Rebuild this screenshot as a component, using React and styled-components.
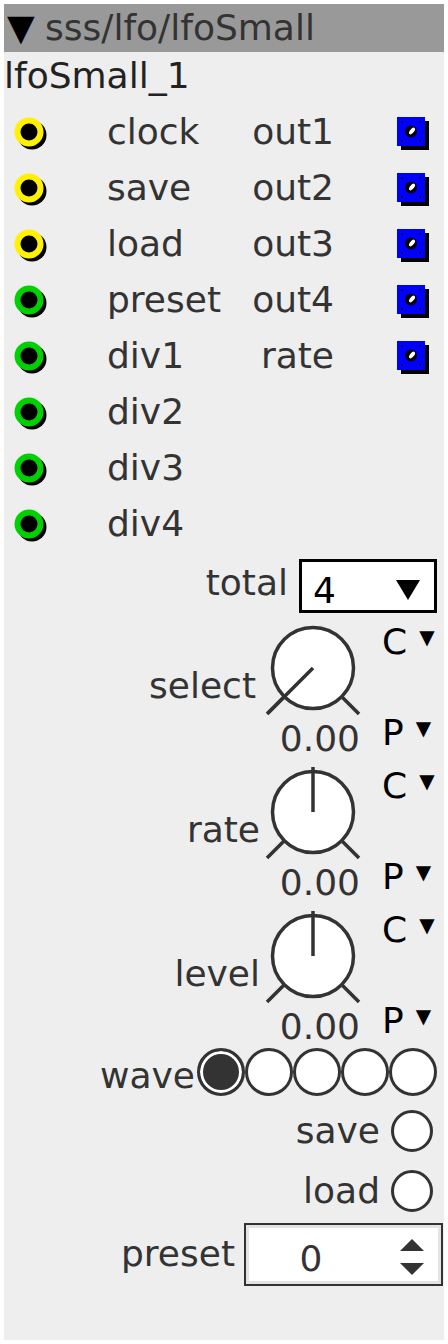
import React from 'react';
import styled, { createGlobalStyle } from 'styled-components';

const GlobalStyle = createGlobalStyle`
  html, body {
    margin: 0;
    padding: 0;
    background: #ffffff;
  }
  body {
    font-family: "DejaVu Sans", "Noto Sans", sans-serif;
  }
`;

const Panel = styled.div`
  margin: 4px;
  width: 440px;
  height: 1336px;
  background: #eeeeee;
  font-size: 36px;
  color: #333333;
  overflow: hidden;
`;

const Header = styled.div`
  height: 48px;
  line-height: 48px;
  background: #999999;
  display: flex;
  padding-left: 3px;
  white-space: nowrap;
`;

const HeaderArrow = styled.span`
  color: #000000;
  width: 38px;
`;

const Title = styled.div`
  height: 52px;
  line-height: 48px;
  color: #222222;
`;

const PortRow = styled.div`
  display: grid;
  grid-template-columns: 103px 1fr auto 110px;
  height: 56px;
  line-height: 56px;
`;

const PortSlot = styled.div`
  padding-left: ${(p) => p.$inset}px;
  padding-top: 13px;
  line-height: 0;
`;

const PortLabel = styled.div`
  text-align: ${(p) => (p.$right ? 'right' : 'left')};
`;

const TotalRow = styled.div`
  margin-top: 7px;
  height: 54px;
  display: flex;
  justify-content: flex-end;
  align-items: flex-start;
  gap: 11px;
  padding-right: 7px;
`;

const Label = styled.div`
  line-height: ${(p) => p.$lh || 48}px;
  padding-top: ${(p) => p.$top || 0}px;
`;

const Dropdown = styled.div`
  box-sizing: border-box;
  width: 138px;
  height: 54px;
  border: 3px solid #000000;
  background: #ffffff;
  color: #000000;
  display: flex;
  justify-content: space-between;
  align-items: flex-start;
  padding: 10px 14px 0 11px;
  line-height: 38px;
`;

const DropArrow = styled.svg`
  margin-top: 8px;
`;

const KnobBlock = styled.div`
  display: grid;
  grid-template-columns: 1fr 98px 82px;
  grid-template-rows: 100px 44px;
  height: 144px;
  margin-top: ${(p) => p.$top || 0}px;
`;

const KnobLabel = styled.div`
  grid-column: 1;
  grid-row: 1;
  text-align: right;
  padding-right: ${(p) => p.$pad}px;
  padding-top: 48px;
  line-height: 41px;
`;

const KnobFace = styled.svg`
  grid-column: 2;
  grid-row: 1;
  display: block;
`;

const KnobValue = styled.div`
  grid-column: 2;
  grid-row: 2;
  text-align: right;
  padding-right: 2px;
  line-height: 44px;
`;

const KnobSide = styled.div`
  grid-column: 3;
  grid-row: 1 / 3;
  display: flex;
  flex-direction: column;
  justify-content: space-between;
  padding: 4px 0 2px 20px;
  line-height: 41px;
  color: #000000;
`;

const Mode = styled.div`
  display: flex;
  align-items: baseline;
`;

const SmallArrow = styled.span`
  font-size: 20px;
  margin-left: 12px;
  position: relative;
  top: -10px;
`;

const WaveRow = styled.div`
  margin-top: -1px;
  height: 48px;
  display: flex;
  justify-content: flex-end;
  align-items: flex-start;
  padding-right: 7px;
  gap: 2px;
`;

const Radios = styled.div`
  display: flex;
`;

const Radio = styled.span`
  box-sizing: border-box;
  width: 48px;
  height: 48px;
  border-radius: 50%;
  border: 3px solid #333333;
  background: ${(p) => (p.$on ? '#333333' : '#ffffff')};
  box-shadow: ${(p) => (p.$on ? 'inset 0 0 0 3px #ffffff' : 'none')};
`;

const ButtonRow = styled.div`
  margin-top: ${(p) => p.$top}px;
  height: 42px;
  display: flex;
  justify-content: flex-end;
  align-items: flex-start;
  padding-right: 11px;
  gap: 11px;
`;

const RoundButton = styled.span`
  box-sizing: border-box;
  width: 42px;
  height: 42px;
  border-radius: 50%;
  border: 3px solid #333333;
  background: #ffffff;
`;

const PresetRow = styled.div`
  margin-top: 11px;
  height: 63px;
  display: flex;
  justify-content: flex-end;
  align-items: flex-start;
  padding-right: 1px;
  gap: 9px;
`;

const Spinner = styled.div`
  box-sizing: border-box;
  width: 199px;
  height: 63px;
  border: 2px solid #333333;
  background: #ffffff;
  box-shadow: inset 0 0 0 3px #e4e4e4;
  display: flex;
  align-items: flex-start;
`;

const SpinValue = styled.div`
  width: 130px;
  text-align: center;
  padding-top: 13px;
  line-height: 41px;
`;

const SpinArrows = styled.svg`
  margin-left: auto;
  margin-right: 17px;
  margin-top: 14px;
`;

const InPort = ({ color }) => (
  <svg width="34" height="34" viewBox="0 0 34 34">
    <circle cx="18" cy="18" r="14.5" fill="#000" />
    <circle cx="15" cy="15" r="11.5" fill="none" stroke={color} strokeWidth="6" />
  </svg>
);

const OutPort = () => (
  <svg width="34" height="34" viewBox="0 0 34 34">
    <rect x="4" y="4" width="28" height="29" fill="#000" />
    <rect x="0" y="0" width="28" height="29" fill="#0000ff" />
    <circle cx="5" cy="5" r="1" fill="#000" />
    <circle cx="23" cy="5" r="1" fill="#000" />
    <circle cx="5" cy="24" r="1" fill="#000" />
    <circle cx="23" cy="24" r="1" fill="#000" />
    <circle cx="14" cy="14.5" r="6" fill="#000" />
    <ellipse cx="15" cy="14" rx="4" ry="2" fill="#fff" transform="rotate(-50 15 14)" />
  </svg>
);

const Knob = ({ angle }) => {
  // angle in degrees, 0 = straight up, -135 = min
  const rad = (angle * Math.PI) / 180;
  const len = angle === 0 ? 45 : 64;
  const x2 = 49 + Math.sin(rad) * len;
  const y2 = 51 - Math.cos(rad) * len;
  return (
    <KnobFace width="98" height="100" viewBox="0 0 98 100">
      <line x1="49" y1="51" x2="3" y2="97" stroke="#333" strokeWidth="3.5" />
      <line x1="49" y1="51" x2="95" y2="97" stroke="#333" strokeWidth="3.5" />
      <circle cx="49" cy="51" r="40.5" fill="#fff" stroke="#333" strokeWidth="3.5" />
      <line x1="49" y1="51" x2={x2} y2={y2} stroke="#333" strokeWidth="3.5" />
    </KnobFace>
  );
};

const ports = [
  { left: 'clock', color: '#fff200', right: 'out1' },
  { left: 'save', color: '#fff200', right: 'out2' },
  { left: 'load', color: '#fff200', right: 'out3' },
  { left: 'preset', color: '#00d000', right: 'out4' },
  { left: 'div1', color: '#00d000', right: 'rate' },
  { left: 'div2', color: '#00d000' },
  { left: 'div3', color: '#00d000' },
  { left: 'div4', color: '#00d000' },
];

const knobs = [
  { name: 'select', angle: -135, pad: 8, top: 4 },
  { name: 'rate', angle: 0, pad: 4 },
  { name: 'level', angle: 0, pad: 4 },
];

export default function App() {
  return (
    <>
      <GlobalStyle />
      <Panel>
        <Header>
          <HeaderArrow>▼</HeaderArrow>
          <span>sss/lfo/lfoSmall</span>
        </Header>
        <Title>lfoSmall_1</Title>

        {ports.map((p) => (
          <PortRow key={p.left}>
            <PortSlot $inset={10}>
              <InPort color={p.color} />
            </PortSlot>
            <PortLabel>{p.left}</PortLabel>
            <PortLabel $right>{p.right}</PortLabel>
            <PortSlot $inset={63}>{p.right && <OutPort />}</PortSlot>
          </PortRow>
        ))}

        <TotalRow>
          <Label>total</Label>
          <Dropdown>
            <span>4</span>
            <DropArrow width="24" height="20" viewBox="0 0 24 20">
              <polygon points="0,0 24,0 12,20" fill="#000" />
            </DropArrow>
          </Dropdown>
        </TotalRow>

        {knobs.map((k) => (
          <KnobBlock key={k.name} $top={k.top}>
            <KnobLabel $pad={k.pad}>{k.name}</KnobLabel>
            <Knob angle={k.angle} />
            <KnobValue>0.00</KnobValue>
            <KnobSide>
              <Mode>
                C<SmallArrow>▼</SmallArrow>
              </Mode>
              <Mode>
                P<SmallArrow>▼</SmallArrow>
              </Mode>
            </KnobSide>
          </KnobBlock>
        ))}

        <WaveRow>
          <Label $top={4}>wave</Label>
          <Radios>
            {[0, 1, 2, 3, 4].map((i) => (
              <Radio key={i} $on={i === 0} />
            ))}
          </Radios>
        </WaveRow>

        <ButtonRow $top={14}>
          <Label $lh={42}>save</Label>
          <RoundButton />
        </ButtonRow>
        <ButtonRow $top={18}>
          <Label $lh={42}>load</Label>
          <RoundButton />
        </ButtonRow>

        <PresetRow>
          <Label $lh={41} $top={10}>preset</Label>
          <Spinner>
            <SpinValue>0</SpinValue>
            <SpinArrows width="24" height="36" viewBox="0 0 24 36">
              <polygon points="0,12 12,0 24,12" fill="#333" />
              <polygon points="0,24 24,24 12,36" fill="#333" />
            </SpinArrows>
          </Spinner>
        </PresetRow>
      </Panel>
    </>
  );
}
